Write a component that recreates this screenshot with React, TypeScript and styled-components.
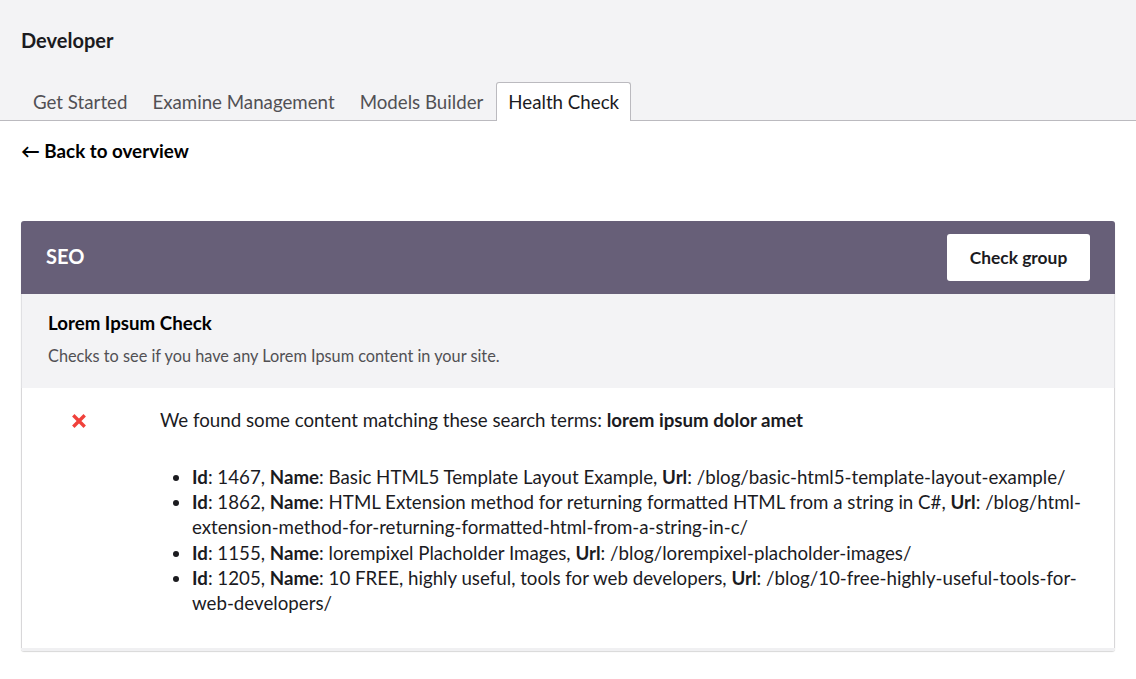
import React from "react";
import styled, { createGlobalStyle } from "styled-components";

const Global = createGlobalStyle`
  html, body { margin: 0; padding: 0; background: #fff; }
  body { font-family: Lato, "Open Sans", sans-serif; color: #1b1b1f; }
`;

const Page = styled.div`
  width: 1136px;
  min-height: 679px;
  background: #fff;
`;

const Header = styled.header`
  background: #f3f3f5;
  border-bottom: 1px solid #bbbabf;
  padding: 0 21px;
`;

const Title = styled.h1`
  margin: 0;
  padding-top: 29px;
  font-size: 20px;
  font-weight: 700;
  line-height: 22px;
  color: #1b1b1f;
`;

const Tabs = styled.nav`
  display: flex;
  margin-top: 31px;
  gap: 1px;
`;

const Tab = styled.div<{ $active?: boolean }>`
  padding: 0 11px;
  height: 37px;
  display: flex;
  align-items: center;
  font-size: 18.72px;
  color: ${(p) => (p.$active ? "#1b1b1f" : "#515054")};
  background: ${(p) => (p.$active ? "#fff" : "transparent")};
  border: 1px solid ${(p) => (p.$active ? "#bbbabf" : "transparent")};
  border-bottom: none;
  border-radius: 3px 3px 0 0;
  margin-bottom: -1px;
  padding-bottom: ${(p) => (p.$active ? "1px" : "0")};
`;

const Content = styled.main`
  padding: 19px 21px 0;
`;

const BackLink = styled.a`
  display: inline-block;
  font-size: 18.8px;
  font-weight: 700;
  color: #000;
  text-decoration: none;
  line-height: 22px;
`;

const Card = styled.section`
  margin-top: 59px;
  border-radius: 3px;
  overflow: hidden;
  box-shadow: 0 1px 1px rgba(0, 0, 0, 0.16);
  border-bottom: 3px solid #f0f0f2;
`;

const CardHead = styled.div`
  background: #675f78;
  height: 73px;
  display: flex;
  align-items: center;
  justify-content: space-between;
  padding: 0 25px 0 25px;
`;

const CardTitle = styled.h2`
  margin: 0 0 3px;
  color: #fff;
  font-size: 20px;
  font-weight: 700;
`;

const Button = styled.button`
  font-family: Lato, sans-serif;
  background: #fff;
  border: none;
  border-radius: 3px;
  width: 143px;
  height: 47px;
  font-size: 17.4px;
  font-weight: 700;
  color: #1b1b1f;
  padding-bottom: 2px;
`;

const CheckInfo = styled.div`
  background: #f3f3f5;
  padding: 18px 26px 0;
  height: 94px;
  box-sizing: border-box;
  border-left: 1px solid #e0e0e3;
  border-right: 1px solid #e0e0e3;
`;

const CheckName = styled.h3`
  margin: 0;
  font-size: 18.7px;
  font-weight: 700;
  line-height: 22px;
  color: #000;
`;

const CheckDesc = styled.p`
  margin: 12px 0 0;
  font-size: 16.3px;
  color: #515054;
  line-height: 20px;
`;

const Result = styled.div`
  display: grid;
  grid-template-columns: 138px 1fr;
  padding: 20px 24px 32px 0;
  border-left: 1px solid #d8d7d9;
  border-right: 1px solid #d8d7d9;
`;

const IconCell = styled.div`
  display: flex;
  justify-content: flex-start;
  padding: 6px 0 0 50px;
`;

const Message = styled.div`
  font-size: 18.7px;
  color: #1b1b1f;
  line-height: 24px;
`;

const List = styled.ul`
  margin: 33px 0 0;
  padding-left: 32px;
  li {
    line-height: 25.2px;
    font-size: 18.7px;
  }
`;

const items = [
  { id: "1467", name: "Basic HTML5 Template Layout Example", url: "/blog/basic-html5-template-layout-example/" },
  { id: "1862", name: "HTML Extension method for returning formatted HTML from a string in C#", url: "/blog/html-extension-method-for-returning-formatted-html-from-a-string-in-c/" },
  { id: "1155", name: "lorempixel Placholder Images", url: "/blog/lorempixel-placholder-images/" },
  { id: "1205", name: "10 FREE, highly useful, tools for web developers", url: "/blog/10-free-highly-useful-tools-for-web-developers/" },
];

export default function App() {
  return (
    <Page>
      <Global />
      <Header>
        <Title>Developer</Title>
        <Tabs>
          <Tab>Get Started</Tab>
          <Tab>Examine Management</Tab>
          <Tab>Models Builder</Tab>
          <Tab $active>Health Check</Tab>
        </Tabs>
      </Header>
      <Content>
        <BackLink>← Back to overview</BackLink>
        <Card>
          <CardHead>
            <CardTitle>SEO</CardTitle>
            <Button>Check group</Button>
          </CardHead>
          <CheckInfo>
            <CheckName>Lorem Ipsum Check</CheckName>
            <CheckDesc>Checks to see if you have any Lorem Ipsum content in your site.</CheckDesc>
          </CheckInfo>
          <Result>
            <IconCell>
              <svg width="14" height="14" viewBox="0 0 14 14">
                <path d="M2.5 2.5 L11.5 11.5 M11.5 2.5 L2.5 11.5" stroke="#f0413b" strokeWidth="3.4" strokeLinecap="square" />
              </svg>
            </IconCell>
            <Message>
              We found some content matching these search terms: <b>lorem ipsum dolor amet</b>
              <List>
                {items.map((it) => (
                  <li key={it.id}>
                    <b>Id</b>: {it.id}, <b>Name</b>: {it.name}, <b>Url</b>: {it.url}
                  </li>
                ))}
              </List>
            </Message>
          </Result>
        </Card>
      </Content>
    </Page>
  );
}
